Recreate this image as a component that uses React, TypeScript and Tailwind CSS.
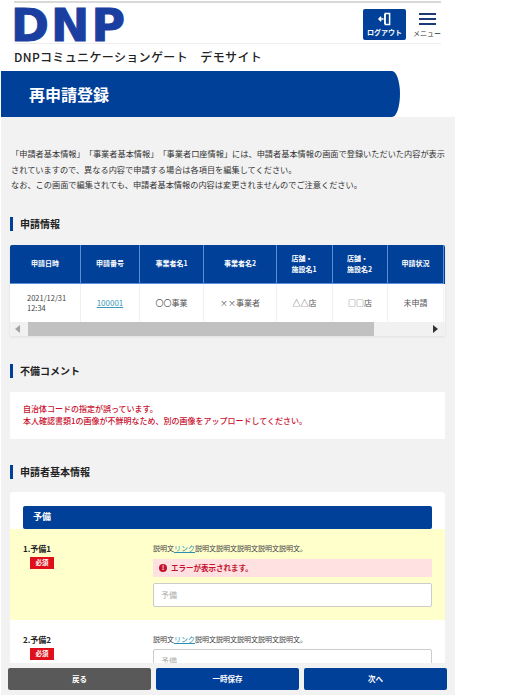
const jpFont = "font-['Noto_Sans_CJK_JP','Liberation_Sans',sans-serif] [text-spacing-trim:space-all]";

const columns = [
  { head: ["申請日時"], body: "2021/12/31" },
  { head: ["申請番号"], body: "100001", link: true },
  { head: ["事業者名1"], body: "〇〇事業" },
  { head: ["事業者名2"], body: "××事業者" },
  { head: ["店舗・", "施設名1"], body: "△△店" },
  { head: ["店舗・", "施設名2"], body: "□□店" },
  { head: ["申請状況"], body: "未申請" },
];

function SectionTitle({ children }: { children: string }) {
  return (
    <h2 className="flex items-center gap-[7px] text-[10px] leading-[14px] font-bold text-[#222]">
      <span className="h-[14px] w-[3px] bg-[#004098]" />
      {children}
    </h2>
  );
}

function FieldRow({
  no,
  highlighted,
  children,
}: {
  no: string;
  highlighted?: boolean;
  children: React.ReactNode;
}) {
  return (
    <div className={`flex pl-[13px] pr-[13px] pt-[14px] ${highlighted ? "h-[91px] bg-[#ffffcc]" : "bg-white"}`}>
      <div className="w-[130px] shrink-0">
        <p className="text-[8px] leading-[12px] font-bold text-[#222]">{no}</p>
        <span className="ml-[7px] mt-[2px] flex h-[12px] w-[24px] items-center justify-center bg-[#e00f1c] text-[6.5px] font-bold text-white">
          必須
        </span>
      </div>
      <div className="min-w-0 flex-1">
        <p className="text-[7px] leading-[10px] text-[#444]">
          説明文<span className="text-[#2a8fb5] underline">リンク</span>説明文説明文説明文説明文説明文。
        </p>
        {children}
      </div>
    </div>
  );
}

function TextInput() {
  return (
    <div className="flex h-[24px] items-center rounded-[2px] border border-[#ccc] bg-white px-[7px] text-[8px] text-[#aaa]">
      予備
    </div>
  );
}

export default function App() {
  return (
    <div className={`relative h-[700px] w-[525px] overflow-hidden bg-white ${jpFont}`}>
      <header className="ml-[14px] mt-[1px] w-[427px] border-t-2 border-[#d9d9d9]">
        <div className="flex h-[41px] items-end justify-between border-b border-[#eee] pb-[3px]">
          <span className="-mb-[8px] -ml-[3px] origin-left scale-x-[1.04] font-['DejaVu_Sans',sans-serif] text-[44px] leading-[44px] font-bold tracking-[2px] text-[#1b3fa0] [-webkit-text-stroke:1px_#1b3fa0]">
            DNP
          </span>
          <div className="flex items-center gap-[7px]">
            <button className="flex h-[31px] w-[43px] flex-col items-center justify-center rounded-[2px] bg-[#004098] text-white">
              <svg width="13" height="14" viewBox="0 0 14 14" fill="none" stroke="currentColor" strokeWidth="1.6">
                <path d="M7 1h5.5v12H7" />
                <path d="M7.5 1.5v11" strokeWidth="2" />
                <path d="M6 7H1M3.4 4.6 1 7l2.4 2.4" />
              </svg>
              <span className="mt-[2px] text-[7px] leading-[9px] font-bold">ログアウト</span>
            </button>
            <div className="flex w-[28px] flex-col items-center pt-[1px]">
              <div className="flex w-[17px] flex-col gap-[3px]">
                <span className="h-[2px] bg-[#1c3a78]" />
                <span className="h-[2px] bg-[#1c3a78]" />
                <span className="h-[2px] bg-[#1c3a78]" />
              </div>
              <span className="mt-[4px] whitespace-nowrap text-[7px] leading-[9px] text-[#333]">メニュー</span>
            </div>
          </div>
        </div>
        <p className="whitespace-nowrap pt-[4px] text-[12px] leading-[18px] font-medium tracking-[0.35px] text-[#222]">
          DNPコミュニケーションゲート　デモサイト
        </p>
      </header>

      <div className="ml-[1px] mt-[5px] flex h-[46px] w-[399px] items-center rounded-tr-[8px_23px] rounded-br-[8px_23px] bg-[#004098] pl-[28px] text-[16px] font-bold text-white">
        再申請登録
      </div>

      <main className="ml-[1px] h-[578px] w-[454px] bg-[#f2f2f2] pl-[9px] pr-[10px]">
        <div className="pl-[1px] pt-[29px] text-[8.2px] leading-[15.5px] text-[#333]">
          <p className="whitespace-nowrap">「申請者基本情報」「事業者基本情報」「事業者口座情報」には、申請者基本情報の画面で登録いただいた内容が表示</p>
          <p>されていますので、異なる内容で申請する場合は各項目を編集してください。</p>
          <p>なお、この画面で編集されても、申請者基本情報の内容は変更されませんのでご注意ください。</p>
        </div>

        <section className="pt-[24px]">
          <SectionTitle>申請情報</SectionTitle>
          <div className="mt-[14px] w-[435px] overflow-hidden rounded-t-[2px] bg-white shadow-[0_1px_3px_rgba(0,0,0,0.08)]">
            <div className="grid grid-cols-[71px_59px_64px_73px_56px_55px_56px_1px]">
              {columns.map((col) => (
                <div
                  key={col.head.join("")}
                  className="flex h-[39px] flex-col items-center justify-center border-r border-b border-[#5b8fd6] bg-[#004098] text-[7px] leading-[11px] font-bold text-white"
                >
                  {col.head.map((line) => (
                    <span key={line} className={col.head.length > 1 ? "w-[26px]" : ""}>
                      {line}
                    </span>
                  ))}
                </div>
              ))}
              <div className="bg-[#004098]" />
              <div className="flex h-[38px] flex-col justify-center border-r border-[#f0f0f0] pl-[17px] text-[7.5px] leading-[10px] text-[#444]">
                <span>2021/12/31</span>
                <span>12:34</span>
              </div>
              {columns.slice(1).map((col) => (
                <div
                  key={col.body}
                  className={`flex h-[38px] items-center justify-center border-r border-[#f0f0f0] text-[8px] opacity-90 ${col.link ? "text-[#2a8fb5] underline" : "text-[#444]"}`}
                >
                  {col.body}
                </div>
              ))}
              <div />
            </div>
            <div className="flex h-[14px] items-center bg-[#f1f1f1]">
              <span className="ml-[5px] h-0 w-0 border-y-[4px] border-r-[5px] border-y-transparent border-r-[#a3a3a3]" />
              <span className="ml-[8px] h-[14px] w-[346px] bg-[#c1c1c1]" />
              <span className="ml-auto mr-[7px] h-0 w-0 border-y-[4px] border-l-[5px] border-y-transparent border-l-[#333]" />
            </div>
          </div>
        </section>

        <section className="pt-[28px]">
          <SectionTitle>不備コメント</SectionTitle>
          <div className="mt-[14px] h-[47px] w-[435px] bg-white pl-[13px] pt-[11px] text-[8px] leading-[12.5px] font-medium text-[#c8102e]">
            <p>自治体コードの指定が誤っています。</p>
            <p>本人確認書類1の画像が不鮮明なため、別の画像をアップロードしてください。</p>
          </div>
        </section>

        <section className="pt-[26px]">
          <SectionTitle>申請者基本情報</SectionTitle>
          <div className="mt-[13px] w-[435px] rounded-t-[3px] bg-white pt-[14px]">
            <div className="mx-[13px] flex h-[23px] items-center rounded-[2px] bg-[#004098] pl-[10px] text-[9px] font-bold text-white">
              予備
            </div>
            <FieldRow no="1.予備1" highlighted>
              <div className="mb-[6px] mt-[6px] flex h-[18px] items-center gap-[4px] bg-[#ffe1e1] pl-[6px] text-[7.5px] font-bold text-[#c8102e]">
                <span className="flex h-[8px] w-[8px] items-center justify-center rounded-full bg-[#c8102e] text-[6px] leading-none font-bold text-white">
                  !
                </span>
                エラーが表示されます。
              </div>
              <TextInput />
            </FieldRow>
            <FieldRow no="2.予備2">
              <div className="mt-[5px]">
                <TextInput />
              </div>
            </FieldRow>
          </div>
        </section>
      </main>

      {/* fixed action bar, sits over the form */}
      <div className="absolute left-[1px] top-[663px] flex h-[32px] w-[454px] gap-[5px] bg-[#f2f2f2] pl-[7px] pt-[5px]">
        <button className="h-[22px] w-[143px] rounded-[2px] bg-[#595959] text-[7.5px] font-bold text-white">戻る</button>
        <button className="h-[22px] w-[143px] rounded-[2px] bg-[#004098] text-[7.5px] font-bold text-white">一時保存</button>
        <button className="h-[22px] w-[143px] rounded-[2px] bg-[#004098] text-[7.5px] font-bold text-white">次へ</button>
      </div>
    </div>
  );
}
